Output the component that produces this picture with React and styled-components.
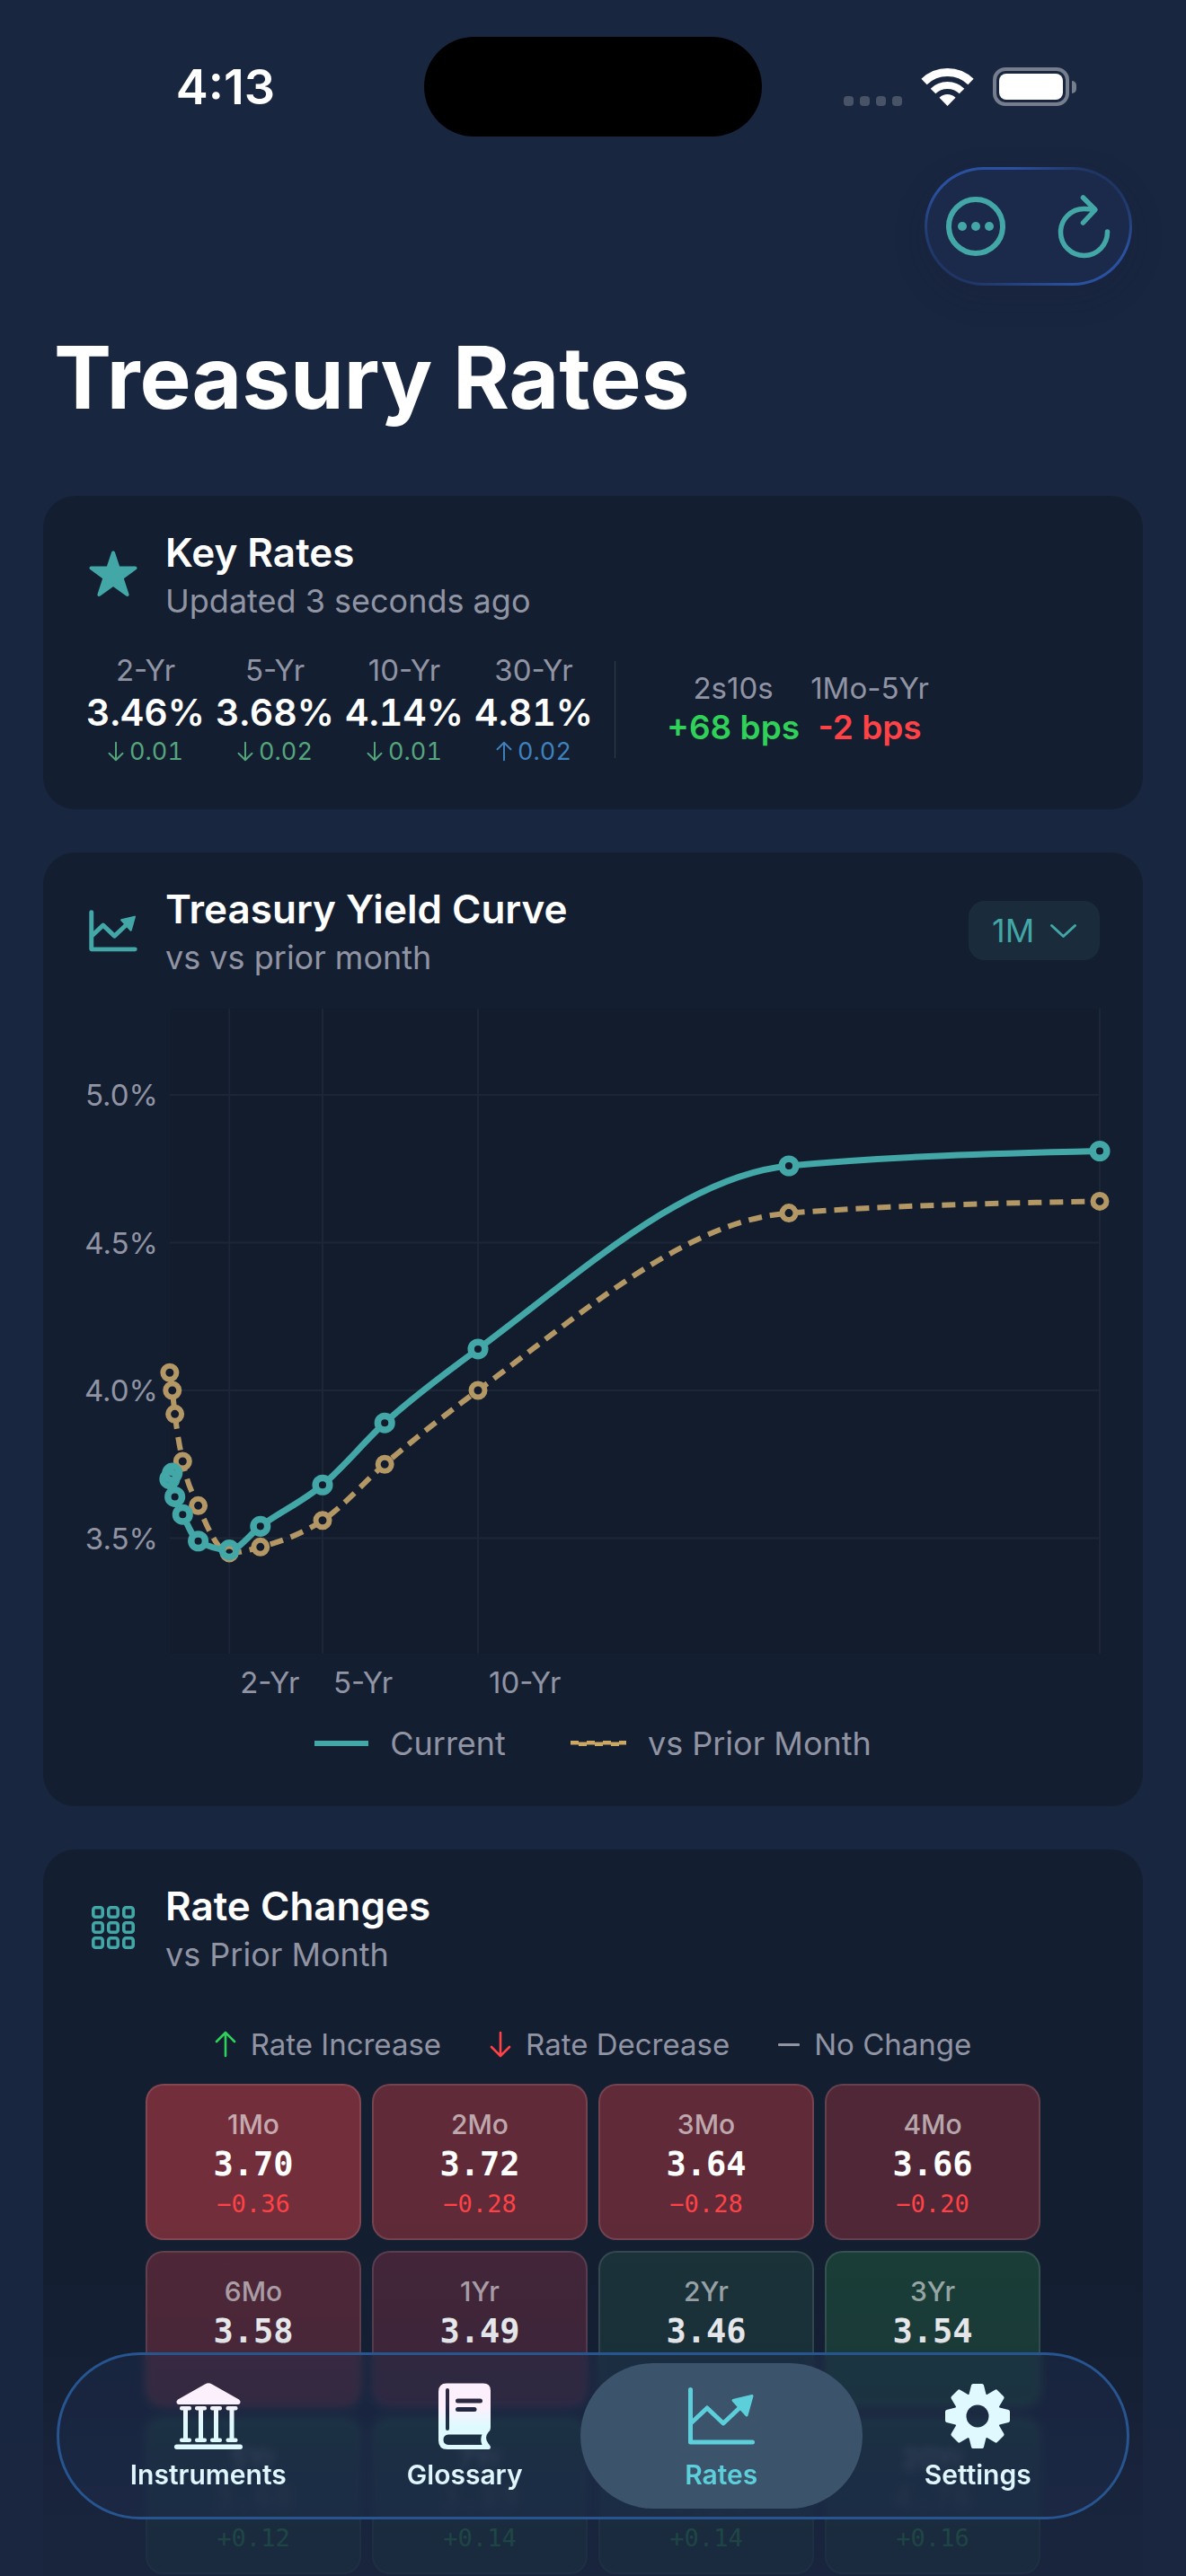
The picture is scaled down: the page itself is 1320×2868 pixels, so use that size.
import { useState } from "react"
import styled, { createGlobalStyle } from "styled-components"

const GlobalStyle = createGlobalStyle`
    * { box-sizing: border-box; }
    body {
        margin: 0;
        background: #192640;
        color: #ffffff;
        font-family: Inter, "Liberation Sans", sans-serif;
    }
    button, select { font: inherit; color: inherit; border: none; background: none; padding: 0; }
    h1, h2, p, dl, dd, dt, ul { margin: 0; padding: 0; }
    svg { display: block; overflow: visible; flex: none; }
`

const teal = "#42a7a6"
const tan = "#b39765"
const muted = "#9094a3"

const Screen = styled.div`
    position: relative;
    height: 100vh;
    overflow: hidden;
`

/* status bar */
const StatusBar = styled.header`
    display: grid;
    grid-template-columns: 1fr 376px 1fr;
    align-items: center;
    padding: 41px 0 34px;
`
const Time = styled.time`
    padding-left: 30px;
    text-align: center;
    font-size: 54px;
    line-height: 60px;
    font-weight: 600;
`
const Island = styled.div`
    height: 111px;
    border-radius: 56px;
    background: #000000;
`
const StatusIcons = styled.div`
    display: flex;
    justify-content: center;
    align-items: flex-end;
    gap: 22px;
    padding-right: 32px;
`
const Signal = styled.div`
    display: flex;
    gap: 7px;
`
const SignalDot = styled.span`
    width: 11px;
    height: 11px;
    border-radius: 4px;
    background: #495367;
`
const Battery = styled.div`
    display: flex;
    align-items: center;
    gap: 3px;
`
const BatteryBody = styled.div`
    width: 85px;
    height: 43px;
    padding: 3px;
    border: 4px solid #767d8c;
    border-radius: 14px;
`
const BatteryLevel = styled.div`
    height: 100%;
    border-radius: 8px;
    background: #ffffff;
`
const BatteryTip = styled.div`
    width: 5px;
    height: 14px;
    border-radius: 0 5px 5px 0;
    background: #767d8c;
`

/* top of the page */
const Toolbar = styled.div`
    display: flex;
    justify-content: flex-end;
    padding: 0 60px;
`
const ToolbarGroup = styled.div`
    display: flex;
    justify-content: space-between;
    align-items: center;
    width: 231px;
    height: 132px;
    padding: 0 21px;
    border: 3px solid transparent;
    border-radius: 66px;
    background:
        linear-gradient(#1b2a4a, #1b2a4a) padding-box,
        linear-gradient(35deg, #1f3563 12%, #2a51a0 40%, #2a51a0 68%, #1f3563 88%) border-box;
    box-shadow: 0 12px 36px rgba(24, 30, 54, 0.2);
`
const IconButton = styled.button`
    display: flex;
    color: ${teal};
    cursor: pointer;
`
const PageTitle = styled.h1`
    margin: 42px 60px 72px;
    font-size: 96px;
    line-height: 120px;
    font-weight: 700;
`

/* cards */
const Cards = styled.main`
    display: flex;
    flex-direction: column;
    gap: 48px;
    padding: 0 48px;
`
const Card = styled.section`
    padding: 36px 48px 48px;
    border-radius: 36px;
    background: #141e31;
`
const CardHeader = styled.div`
    display: flex;
    align-items: center;
    gap: 28px;
    color: ${teal};
`
const IconBox = styled.div`
    display: flex;
    justify-content: center;
    width: 60px;
`
const Heading = styled.div`
    flex: 1;
`
const CardTitle = styled.h2`
    font-size: 44px;
    line-height: 54px;
    font-weight: 600;
    color: #ffffff;
`
const Subtitle = styled.p`
    padding-top: 6px;
    font-size: 36px;
    line-height: 42px;
    color: ${muted};
`

/* key rates */
const RatesRow = styled.div`
    display: flex;
    align-items: center;
    margin-top: 36px;
`
const RateList = styled.dl`
    display: flex;
    gap: 12px;
`
const Rate = styled.div`
    display: flex;
    flex-direction: column;
    align-items: center;
    min-width: 132px;
`
const RateLabel = styled.dt`
    font-size: 33px;
    line-height: 40px;
    color: ${muted};
`
const RateValue = styled.dd`
    font-size: 41px;
    line-height: 54px;
    font-weight: 600;
    font-feature-settings: "tnum";
`
const RateDelta = styled.dd`
    display: flex;
    align-items: center;
    gap: 6px;
    font-size: 27px;
    line-height: 33px;
    font-feature-settings: "tnum";
    color: ${p => (p.$up ? "#3f82bd" : "#55a67c")};
`
const Divider = styled.div`
    width: 1px;
    height: 108px;
    margin: 0 57px 0 24px;
    background: #323b48;
`
const SpreadValue = styled.dd`
    font-size: 37px;
    line-height: 48px;
    font-weight: 600;
    color: ${p => (p.$up ? "#30d158" : "#ff4245")};
`

/* yield curve */
const PeriodPicker = styled.label`
    position: relative;
    display: block;
    width: 146px;
    height: 66px;
    border-radius: 18px;
    background: #1a2c3c;
    color: ${teal};
`
const PeriodSelect = styled.select`
    width: 100%;
    height: 100%;
    padding-left: 26px;
    appearance: none;
    font-size: 36px;
    cursor: pointer;
`
const Chevron = styled.svg`
    position: absolute;
    top: 26px;
    right: 26px;
    pointer-events: none;
`
const Chart = styled.svg`
    width: 100%;
    height: auto;
    margin-top: 36px;
    text {
        font-size: 33px;
        fill: ${muted};
    }
`
const ChartLegend = styled.div`
    display: flex;
    justify-content: center;
    gap: 72px;
    margin-top: 24px;
    font-size: 36px;
    line-height: 44px;
    color: ${muted};
`
const LegendItem = styled.span`
    display: flex;
    align-items: center;
    gap: ${p => p.$gap}px;
`

/* rate changes */
const ChangeLegend = styled.div`
    display: flex;
    justify-content: center;
    gap: 54px;
    margin: 57px 0 22px;
    font-size: 33px;
    line-height: 44px;
    color: ${muted};
`
const HeatMap = styled.div`
    display: grid;
    grid-template-columns: repeat(4, 240px);
    justify-content: center;
    gap: 12px;
`
const Tile = styled.div`
    display: flex;
    flex-direction: column;
    align-items: center;
    height: 174px;
    padding-top: 24px;
    border: 2px solid rgba(255, 255, 255, 0.12);
    border-radius: 20px;
    background: ${p => p.$color};
`
const TileLabel = styled.span`
    font-size: 30px;
    line-height: 38px;
    font-weight: 500;
    color: rgba(255, 255, 255, 0.6);
`
const TileValue = styled.span`
    font-family: "DejaVu Sans Mono", monospace;
    font-size: 37px;
    line-height: 52px;
    font-weight: 700;
    color: ${p => (p.$dim ? "rgba(255, 255, 255, 0.2)" : "#ffffff")};
`
const TileChange = styled.span`
    font-family: "DejaVu Sans Mono", monospace;
    font-size: 27px;
    line-height: 36px;
    color: ${p => (p.$up ? "#30d158" : "#ff4245")};
`

/* tab bar */
const BottomFade = styled.div`
    position: absolute;
    left: 0;
    right: 0;
    bottom: 0;
    height: 400px;
    background: linear-gradient(
        rgba(26, 38, 64, 0),
        rgba(26, 38, 64, 0.12) 33%,
        rgba(26, 38, 64, 0.26) 50%,
        rgba(26, 38, 64, 0.66) 66%,
        rgba(26, 38, 64, 0.82) 90%
    );
`
const TabBar = styled.nav`
    position: absolute;
    left: 63px;
    right: 63px;
    bottom: 63px;
    display: grid;
    grid-template-columns: repeat(4, 1fr);
    height: 186px;
    padding: 9px 23px;
    border: 3px solid #27558f;
    border-radius: 93px;
    background: rgba(30, 44, 78, 0.4);
    backdrop-filter: blur(5px);
`
const Tab = styled.a`
    display: flex;
    flex-direction: column;
    align-items: center;
    justify-content: flex-end;
    gap: 10px;
    height: 162px;
    margin: 0 -14px;
    padding-bottom: 20px;
    border-radius: 81px;
    background: ${p => (p.$active ? "#3b536b" : "none")};
    color: ${p => (p.$active ? "#5ccfdb" : "#e0f6ff")};
    font-size: 30px;
    line-height: 36px;
    font-weight: 600;
    text-decoration: none;
`
const TabIcon = styled.span`
    display: flex;
    align-items: center;
    height: 74px;
`

const Arrow = ({ down, width = 24, color = "currentColor" }) => (
  <svg width={width} height={(width * 28) / 24} viewBox="0 0 24 28" fill="none" stroke={color}
    strokeWidth="2.6" strokeLinecap="round" strokeLinejoin="round" aria-hidden="true">
    <path d={down ? "M12 1V27M2 17L12 27L22 17" : "M12 27V1M2 11L12 1L22 11"} />
  </svg>
)

const Star = () => (
  <svg width="54" height="52" viewBox="0 0 54 52" fill={teal} stroke={teal} strokeWidth="4" strokeLinejoin="round" aria-hidden="true">
    <path d="M27 2.5L32.6 19.5H51.5L36.5 30.3L42.6 49L27 37.6L11.4 49L17.5 30.3L2.5 19.5H21.4Z" />
  </svg>
)

const TrendIcon = ({ width, weight = 5 }) => (
  <svg width={width} viewBox="0 0 74 64" fill="none" stroke="currentColor" strokeWidth={weight}
    strokeLinecap="round" strokeLinejoin="round" aria-hidden="true">
    <path d="M2.5 2.5V61H71.5" />
    <path d="M4 39L21 23L39 40L58 22" />
    <path d="M50 14.5L71 9.5L65 31Z" fill="currentColor" strokeWidth="3" />
  </svg>
)

const GridIcon = () => (
  <svg width="48" height="48" viewBox="0 0 48 48" fill="none" stroke={teal} strokeWidth="3.6" aria-hidden="true">
    {[0, 1, 2].map(row => [0, 1, 2].map(col => (
      <rect key={`${row}-${col}`} x={1.8 + col * 17} y={1.8 + row * 17} width="10.4" height="10.4" rx="2.5" />
    )))}
  </svg>
)

const BankIcon = () => (
  <svg width="76" height="74" viewBox="0 0 76 74" fill="url(#bankFill)" aria-hidden="true">
    <defs>
      <linearGradient id="bankFill" gradientUnits="userSpaceOnUse" x1="0" y1="18" x2="0" y2="46">
        <stop stopColor="#fdf0fd" />
        <stop offset="1" stopColor="#defaff" />
      </linearGradient>
    </defs>
    <path d="M34.5 1.2Q38 -0.8 41.5 1.2L72 18.5Q74 20 73.5 22Q73 24 71 24H5Q3 24 2.5 22Q2 20 4 18.5Z" />
    {[6, 23, 40, 57.5].map(x => (
      <g key={x}>
        <rect x={x} y="26" width="13" height="4.6" rx="2" />
        <rect x={x + 4} y="28" width="5" height="36" />
        <rect x={x} y="61.4" width="13" height="4.6" rx="2" />
      </g>
    ))}
    <rect y="68.5" width="76" height="5.5" rx="2.7" />
  </svg>
)

const BookIcon = () => (
  <svg width="59" height="74" viewBox="0 0 59 74" aria-hidden="true">
    <defs>
      <linearGradient id="bookFill" x1="0" y1="0" x2="0" y2="1">
        <stop offset="0.35" stopColor="#fdf0fd" />
        <stop offset="0.65" stopColor="#defaff" />
      </linearGradient>
      <mask id="bookCut">
        <rect width="59" height="74" fill="#fff" />
        <rect x="8" y="6" width="4" height="47" rx="2" />
        <rect x="19" y="17.5" width="30" height="5" rx="2.5" />
        <rect x="19" y="27" width="23.5" height="5" rx="2.5" />
        <path d="M11 57.5H48.5Q46 63 48.5 69H11Q5.5 68.5 5.5 63.2Q5.5 58 11 57.5Z" />
      </mask>
    </defs>
    <path mask="url(#bookCut)" fill="url(#bookFill)"
      d="M9 0.5H50Q58 0.5 58 8.5V50Q58 53 55.5 55Q50.5 61 55.5 67.5L57.5 70Q59 73 56 74H10Q0 74 0 64V10Q0 0.5 9 0.5Z" />
  </svg>
)

const GearIcon = () => (
  <svg width="74" height="74" viewBox="-37 -37 74 74" aria-hidden="true">
    <defs>
      <mask id="gearCut">
        <rect x="-37" y="-37" width="74" height="74" fill="#fff" />
        <circle r="12.5" />
      </mask>
    </defs>
    <g mask="url(#gearCut)" fill="#e0f8ff" stroke="#e0f8ff" strokeWidth="4" strokeLinejoin="round">
      <circle r="24" />
      {[0, 45, 90, 135, 180, 225, 270, 315].map(turn => (
        <path key={turn} d="M-5 -34H5L8 -22H-8Z" transform={`rotate(${turn})`} />
      ))}
    </g>
  </svg>
)

const keyRates = [
  { label: "2-Yr", value: "3.46%", delta: "0.01" },
  { label: "5-Yr", value: "3.68%", delta: "0.02" },
  { label: "10-Yr", value: "4.14%", delta: "0.01" },
  { label: "30-Yr", value: "4.81%", delta: "0.02", up: true },
]

const tiles = [
  { label: "1Mo", value: "3.70", change: "−0.36", color: "#722e3b" },
  { label: "2Mo", value: "3.72", change: "−0.28", color: "#602a38" },
  { label: "3Mo", value: "3.64", change: "−0.28", color: "#602a38" },
  { label: "4Mo", value: "3.66", change: "−0.20", color: "#502736" },
  { label: "6Mo", value: "3.58", color: "#502737" },
  { label: "1Yr", value: "3.49", color: "#442538" },
  { label: "2Yr", value: "3.46", color: "#1a3238" },
  { label: "3Yr", value: "3.54", color: "#1a3e37" },
  { label: "5Yr", value: "3.68", change: "+0.12", up: true, dim: true, color: "#1a4138" },
  { label: "7Yr", value: "3.89", change: "+0.14", up: true, dim: true, color: "#1a4138" },
  { label: "10Yr", value: "4.14", change: "+0.14", up: true, dim: true, color: "#1a4138" },
  { label: "20Yr", value: "4.76", change: "+0.16", up: true, dim: true, color: "#1a4138" },
]

// [years to maturity, yield]
const current = [
  [1 / 12, 3.7], [2 / 12, 3.72], [0.25, 3.64], [0.5, 3.58], [1, 3.49], [2, 3.46],
  [3, 3.54], [5, 3.68], [7, 3.89], [10, 4.14], [20, 4.76], [30, 4.81],
]
const prior = [
  [1 / 12, 4.06], [2 / 12, 4.0], [0.25, 3.92], [0.5, 3.76], [1, 3.61], [2, 3.45],
  [3, 3.47], [5, 3.56], [7, 3.75], [10, 4.0], [20, 4.6], [30, 4.64],
]

const toX = years => 90 + years * 34.6
const toY = rate => 425 - (rate - 4) * 329
const toPoints = data => data.map(([years, rate]) => [toX(years), toY(rate)])

// monotone cubic through the points, so the curve never overshoots
const monotonePath = pts => {
  const n = pts.length
  const slope = i => (pts[i + 1][1] - pts[i][1]) / (pts[i + 1][0] - pts[i][0])
  const tangents = pts.map((_, i) => {
    if (i === 0 || i === n - 1) return null
    const h0 = pts[i][0] - pts[i - 1][0]
    const h1 = pts[i + 1][0] - pts[i][0]
    const s0 = slope(i - 1)
    const s1 = slope(i)
    const mid = (s0 * h1 + s1 * h0) / (h0 + h1)
    return (Math.sign(s0) + Math.sign(s1)) * Math.min(Math.abs(s0), Math.abs(s1), 0.5 * Math.abs(mid))
  })
  tangents[0] = (3 * slope(0) - tangents[1]) / 2
  tangents[n - 1] = (3 * slope(n - 2) - tangents[n - 2]) / 2
  let d = `M${pts[0][0]} ${pts[0][1]}`
  for (let i = 0; i < n - 1; i++) {
    const [x0, y0] = pts[i]
    const [x1, y1] = pts[i + 1]
    const h = (x1 - x0) / 3
    d += `C${x0 + h} ${y0 + h * tangents[i]} ${x1 - h} ${y1 - h * tangents[i + 1]} ${x1} ${y1}`
  }
  return d
}

const YieldChart = () => {
  const now = toPoints(current)
  const before = toPoints(prior)
  return (
    <Chart viewBox="0 0 1128 772" role="img" aria-label="Treasury yield curve">
      <rect x="93" width="1035" height="718" fill="#121c2d" />
      <g stroke="#1c2637" strokeWidth="2">
        {[5, 4.5, 4, 3.5].map(rate => <line key={rate} x1="93" x2="1128" y1={toY(rate)} y2={toY(rate)} />)}
        {[2, 5, 10, 30].map(years => <line key={years} x1={toX(years)} x2={toX(years)} y1="0" y2="718" />)}
      </g>
      {[5, 4.5, 4, 3.5].map(rate => (
        <text key={rate} x="80" y={toY(rate) + 12} textAnchor="end">{rate.toFixed(1)}%</text>
      ))}
      {[2, 5, 10].map(years => (
        <text key={years} x={toX(years) + 12} y="762">{years}-Yr</text>
      ))}
      <path d={monotonePath(before)} fill="none" stroke={tan} strokeWidth="6" strokeDasharray="15 9" />
      <path d={monotonePath(now)} fill="none" stroke={teal} strokeWidth="7" />
      {[...before, ...now].map(([x, y], i) => <circle key={i} cx={x} cy={y} r="6" fill="#121c2d" />)}
      {before.map(([x, y]) => <circle key={x} cx={x} cy={y} r="7.5" fill="none" stroke={tan} strokeWidth="6" />)}
      {now.map(([x, y]) => <circle key={x} cx={x} cy={y} r="7.8" fill="none" stroke={teal} strokeWidth="7.5" />)}
    </Chart>
  )
}

const StatusRow = () => (
  <StatusBar>
    <Time>4:13</Time>
    <Island />
    <StatusIcons>
      <Signal>
        <SignalDot /><SignalDot /><SignalDot /><SignalDot />
      </Signal>
      <svg width="57" height="42" viewBox="0 0 57 42" fill="none" stroke="#fff" aria-hidden="true">
        <path d="M2.5 15A37.5 37.5 0 0 1 54.5 15" strokeWidth="9" />
        <path d="M12.5 25.5A23 23 0 0 1 44.5 25.5" strokeWidth="8" />
        <path d="M28.5 42L19.5 32.7A13 13 0 0 1 37.5 32.7Z" fill="#fff" stroke="none" />
      </svg>
      <Battery>
        <BatteryBody><BatteryLevel /></BatteryBody>
        <BatteryTip />
      </Battery>
    </StatusIcons>
  </StatusBar>
)

const tabs = [
  { name: "Instruments", icon: <BankIcon /> },
  { name: "Glossary", icon: <BookIcon /> },
  { name: "Rates", icon: <TrendIcon width="74" /> },
  { name: "Settings", icon: <GearIcon /> },
]

const App = () => {
  const [period, setPeriod] = useState("1M")
  return (
    <Screen>
      <GlobalStyle />
      <StatusRow />
      <Toolbar>
        <ToolbarGroup>
          <IconButton aria-label="More">
            <svg width="66" height="66" viewBox="0 0 66 66" fill="none" stroke="currentColor" strokeWidth="6">
              <circle cx="33" cy="33" r="30" />
              <g fill="currentColor" stroke="none">
                <circle cx="18" cy="33" r="5" />
                <circle cx="33" cy="33" r="5" />
                <circle cx="48" cy="33" r="5" />
              </g>
            </svg>
          </IconButton>
          <IconButton aria-label="Refresh">
            <svg width="58" height="70" viewBox="0 0 58 70" fill="none" stroke="currentColor"
              strokeWidth="5.5" strokeLinecap="round" strokeLinejoin="round">
              <path d="M54.5 41A26 26 0 1 1 28.5 15.5Q34 15.5 40 16.5" />
              <path d="M27.5 3L41 16.5L27.5 31" />
            </svg>
          </IconButton>
        </ToolbarGroup>
      </Toolbar>
      <PageTitle>Treasury Rates</PageTitle>

      <Cards>
        <Card>
          <CardHeader>
            <IconBox><Star /></IconBox>
            <Heading>
              <CardTitle>Key Rates</CardTitle>
              <Subtitle>Updated 3 seconds ago</Subtitle>
            </Heading>
          </CardHeader>
          <RatesRow>
            <RateList>
              {keyRates.map(r => (
                <Rate key={r.label}>
                  <RateLabel>{r.label}</RateLabel>
                  <RateValue>{r.value}</RateValue>
                  <RateDelta $up={r.up}><Arrow down={!r.up} width={18} />{r.delta}</RateDelta>
                </Rate>
              ))}
            </RateList>
            <Divider />
            <RateList>
              <Rate>
                <RateLabel>2s10s</RateLabel>
                <SpreadValue $up>+68 bps</SpreadValue>
              </Rate>
              <Rate>
                <RateLabel>1Mo-5Yr</RateLabel>
                <SpreadValue>-2 bps</SpreadValue>
              </Rate>
            </RateList>
          </RatesRow>
        </Card>

        <Card>
          <CardHeader>
            <IconBox><TrendIcon width="52" weight={7} /></IconBox>
            <Heading>
              <CardTitle>Treasury Yield Curve</CardTitle>
              <Subtitle>vs vs prior month</Subtitle>
            </Heading>
            <PeriodPicker>
              <PeriodSelect aria-label="Comparison period" value={period} onChange={e => setPeriod(e.target.value)}>
                <option>1M</option>
                <option>3M</option>
                <option>1Y</option>
              </PeriodSelect>
              <Chevron width="29" height="15" viewBox="0 0 29 15" fill="none" stroke="currentColor"
                strokeWidth="3" strokeLinecap="round" strokeLinejoin="round">
                <path d="M1.5 1.5L14.5 13.5L27.5 1.5" />
              </Chevron>
            </PeriodPicker>
          </CardHeader>
          <YieldChart />
          <ChartLegend>
            <LegendItem $gap={24}>
              <svg width="60" height="6"><rect width="60" height="6" fill={teal} /></svg>
              Current
            </LegendItem>
            <LegendItem $gap={24}>
              <svg width="62" height="6" viewBox="0 0 62 6" stroke="#cba765" strokeWidth="4" strokeDasharray="9 9">
                <path d="M0 2H62" />
                <path d="M0 4H62" strokeDashoffset="9" />
                <path d="M0 3H62" strokeWidth="3" strokeDasharray="none" />
              </svg>
              vs Prior Month
            </LegendItem>
          </ChartLegend>
        </Card>

        <Card>
          <CardHeader>
            <IconBox><GridIcon /></IconBox>
            <Heading>
              <CardTitle>Rate Changes</CardTitle>
              <Subtitle>vs Prior Month</Subtitle>
            </Heading>
          </CardHeader>
          <ChangeLegend>
            <LegendItem $gap={16}><Arrow color="#30d158" />Rate Increase</LegendItem>
            <LegendItem $gap={16}><Arrow down color="#ff4245" />Rate Decrease</LegendItem>
            <LegendItem $gap={16}>
              <svg width="24" height="3"><rect width="24" height="3" rx="1" fill={muted} /></svg>
              No Change
            </LegendItem>
          </ChangeLegend>
          <HeatMap>
            {tiles.map(t => (
              <Tile key={t.label} $color={t.color}>
                <TileLabel>{t.label}</TileLabel>
                <TileValue $dim={t.dim}>{t.value}</TileValue>
                {t.change && <TileChange $up={t.up}>{t.change}</TileChange>}
              </Tile>
            ))}
          </HeatMap>
        </Card>
      </Cards>

      <BottomFade />
      <TabBar>
        {tabs.map(tab => (
          <Tab key={tab.name} href="#" $active={tab.name === "Rates"}>
            <TabIcon>{tab.icon}</TabIcon>
            {tab.name}
          </Tab>
        ))}
      </TabBar>
    </Screen>
  )
}

export default App
